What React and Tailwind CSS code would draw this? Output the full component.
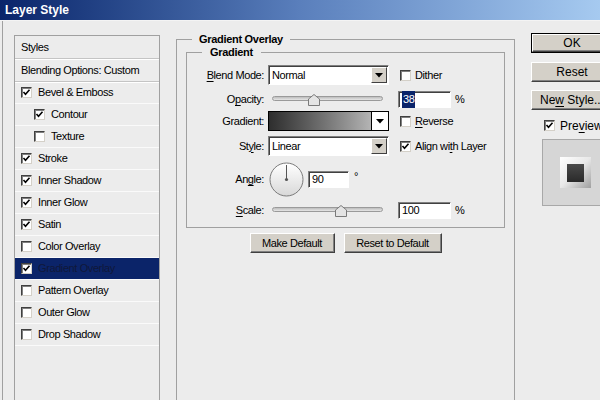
import React from "react";

const font = { fontFamily: '"Liberation Sans", Arial, sans-serif' };

function Check({ checked }) {
  return (
    <span className="inline-flex w-[11px] h-[11px] shrink-0 items-center justify-center bg-white border border-t-[#404040] border-l-[#404040] border-b-[#d4d0c8] border-r-[#d4d0c8] shadow-[inset_1px_1px_0_#808080]">
      {checked && (
        <svg width="9" height="9" viewBox="0 0 9 9">
          <path d="M1.5 4 L3.5 6.2 L7.5 1.8" fill="none" stroke="#000" strokeWidth="1.6" />
        </svg>
      )}
    </span>
  );
}

function U({ children }) {
  return <span className="underline underline-offset-[2px]">{children}</span>;
}

function Button({ children, def, className = "" }) {
  return (
    <div className={`${def ? "border border-black" : ""} ${className}`}>
      <div className="h-full flex items-center justify-center bg-[#d4d0c8] border border-t-white border-l-white border-b-[#404040] border-r-[#404040] shadow-[inset_-1px_-1px_0_#808080] text-black">
        {children}
      </div>
    </div>
  );
}

function Arrow() {
  return (
    <div className="w-[16px] h-full flex items-center justify-center bg-[#d4d0c8] border border-t-white border-l-white border-b-[#404040] border-r-[#404040]">
      <svg width="8" height="5" viewBox="0 0 8 5">
        <path d="M0 0 H8 L4 4.5 Z" fill="#000" />
      </svg>
    </div>
  );
}

function Select({ value }) {
  return (
    <div className="w-[121px] h-[20px] flex bg-white border border-t-[#808080] border-l-[#808080] border-b-white border-r-white shadow-[inset_1px_1px_0_#404040]">
      <div className="flex-1 pl-[3px] pt-[1px] flex items-center">{value}</div>
      <div className="p-[1px] h-full">
        <Arrow />
      </div>
    </div>
  );
}

function Slider({ pos }) {
  return (
    <div className="relative w-[111px] h-[14px] ml-[4px]">
      <div className="absolute left-0 right-0 top-[3px] h-[5px] rounded-full border border-[#9a9a9a] bg-gradient-to-b from-[#bdbdbd] to-[#e6e6e6]" />
      <svg className="absolute top-[1px]" style={{ left: pos - 6 }} width="12" height="12" viewBox="0 0 12 12">
        <path d="M6 0.5 L11.5 5 V11.5 H0.5 V5 Z" fill="#e4e4e4" stroke="#7a7a7a" />
      </svg>
    </div>
  );
}

function Input({ children, w = "w-[53px]" }) {
  return (
    <div className={`${w} h-[17px] bg-white border border-t-[#808080] border-l-[#808080] border-b-white border-r-white shadow-[inset_1px_1px_0_#404040] flex items-center pl-[3px]`}>
      {children}
    </div>
  );
}

const styles = [
  { label: "Bevel & Emboss", checked: true },
  { label: "Contour", checked: true, indent: true },
  { label: "Texture", checked: false, indent: true },
  { label: "Stroke", checked: true },
  { label: "Inner Shadow", checked: true },
  { label: "Inner Glow", checked: true },
  { label: "Satin", checked: true },
  { label: "Color Overlay", checked: false },
  { label: "Gradient Overlay", checked: true, active: true },
  { label: "Pattern Overlay", checked: false },
  { label: "Outer Glow", checked: false },
  { label: "Drop Shadow", checked: false },
];

export default function App() {
  return (
    <div
      className="w-[600px] h-[400px] overflow-hidden bg-[#ececec] text-[11px] tracking-[-0.4px] text-black"
      style={font}
    >
      <div className="h-[21px] flex items-center pl-[5px] bg-gradient-to-r from-[#0a246a] via-[#5a7fbc] to-[#a6caf0] text-white text-[12px] font-bold tracking-normal border-b border-[#f4f4f4]">
        Layer Style
      </div>
      <div className="flex h-[379px] ml-[2px] border-l border-[#a0a0a0]">
        {/* styles list */}
        <div className="ml-[11px] mt-[14px] w-[146px] h-[400px] border border-[#a0a0a0] shrink-0">
          <div className="h-[23px] flex items-center pl-[6px] border-b border-[#c4c4c4] shadow-[0_1px_0_#fff]">Styles</div>
          <div className="h-[23px] flex items-center pl-[6px] border-b border-[#c4c4c4] shadow-[0_1px_0_#fff]">
            Blending Options: Custom
          </div>
          {styles.map((s) => (
            <div
              key={s.label}
              className={`h-[22px] flex items-center gap-[6px] border-b border-[#fafafa] ${
                s.indent ? "pl-[19px]" : "pl-[6px]"
              } ${s.active ? "bg-[#0b2469] text-[#10183a]" : ""}`}
            >
              <Check checked={s.checked} />
              <span>{s.label}</span>
            </div>
          ))}
        </div>

        {/* main group */}
        <fieldset className="ml-[16px] mt-[12px] w-[339px] h-[420px] border border-[#a0a0a0] shrink-0">
          <legend className="ml-[15px] px-[7px] leading-[13px] font-bold tracking-[-0.3px]">Gradient Overlay</legend>
          <fieldset className="mx-[9px] h-[182px] border border-[#a0a0a0]">
            <legend className="ml-[15px] px-[8px] leading-[13px] font-bold tracking-[-0.3px]">Gradient</legend>
            <div className="flex flex-col pt-[6px]">
              <div className="flex items-center h-[20px]">
                <div className="w-[81px] text-right pr-[4px]"><U>B</U>lend Mode:</div>
                <Select value="Normal" />
                <div className="ml-[11px] flex items-center gap-[4px]">
                  <Check />
                  <span>Dither</span>
                </div>
              </div>
              <div className="flex items-center h-[17px] mt-[6px]">
                <div className="w-[81px] text-right pr-[4px]">O<U>p</U>acity:</div>
                <Slider pos={42} />
                <div className="ml-[15px]">
                  <Input>
                    <span className="bg-[#0a246a] text-white px-[1px]">38</span>
                  </Input>
                </div>
                <span className="ml-[4px]">%</span>
              </div>
              <div className="flex items-center h-[20px] mt-[3px]">
                <div className="w-[81px] text-right pr-[4px]">Gradient:</div>
                <div className="w-[121px] h-[20px] flex border border-black bg-white">
                  <div className="w-[103px] h-full bg-gradient-to-r from-[#2e2e2e] to-[#b4b4b4] border-r border-black" />
                  <div className="flex-1 flex items-center justify-center">
                    <svg width="8" height="5" viewBox="0 0 8 5">
                      <path d="M0 0 H8 L4 4.5 Z" fill="#000" />
                    </svg>
                  </div>
                </div>
                <div className="ml-[11px] flex items-center gap-[4px]">
                  <Check />
                  <span><U>R</U>everse</span>
                </div>
              </div>
              <div className="flex items-center h-[20px] mt-[5px]">
                <div className="w-[81px] text-right pr-[4px]">St<U>y</U>le:</div>
                <Select value="Linear" />
                <div className="ml-[11px] flex items-center gap-[4px]">
                  <Check checked />
                  <span>Align wi<U>t</U>h Layer</span>
                </div>
              </div>
              <div className="flex items-center h-[35px] mt-[6px]">
                <div className="w-[81px] text-right pr-[4px]">An<U>g</U>le:</div>
                <svg className="ml-[1px]" width="35" height="35" viewBox="0 0 35 35">
                  <defs>
                    <linearGradient id="dial" x1="0" y1="0" x2="0" y2="1">
                      <stop offset="0" stopColor="#ffffff" />
                      <stop offset="1" stopColor="#d8d8d8" />
                    </linearGradient>
                  </defs>
                  <circle cx="17.5" cy="17.5" r="16.5" fill="url(#dial)" stroke="#7a7a7a" />
                  <line x1="17.5" y1="17.5" x2="17.5" y2="3" stroke="#555" strokeWidth="1" />
                  <circle cx="17.5" cy="17.5" r="1.6" fill="#555" />
                </svg>
                <div className="ml-[4px]">
                  <Input w="w-[41px]">90</Input>
                </div>
                <span className="ml-[5px] self-start mt-[6px]">°</span>
              </div>
              <div className="flex items-center h-[17px] mt-[5px]">
                <div className="w-[81px] text-right pr-[4px]"><U>S</U>cale:</div>
                <Slider pos={69} />
                <div className="ml-[15px]">
                  <Input>100</Input>
                </div>
                <span className="ml-[4px]">%</span>
              </div>
            </div>
          </fieldset>
          <div className="flex justify-center gap-[9px] mt-[5px]">
            <Button className="w-[85px] h-[20px]">Make Default</Button>
            <Button className="w-[98px] h-[20px]">Reset to Default</Button>
          </div>
        </fieldset>

        {/* right column */}
        <div className="ml-[16px] mt-[12px] flex flex-col shrink-0 w-[84px] text-[12px] tracking-normal">
          <Button def className="w-[82px] h-[20px]">OK</Button>
          <Button className="w-[82px] h-[20px] mt-[9px]">Reset</Button>
          <Button className="w-[82px] h-[20px] mt-[8px]">
            <span className="whitespace-nowrap">Ne<U>w</U> Style...</span>
          </Button>
          <div className="flex items-center gap-[5px] ml-[13px] mt-[9px] h-[13px]">
            <Check checked />
            <span>Pre<U>v</U>iew</span>
          </div>
          <div className="ml-[11px] mt-[7px] w-[70px] h-[67px] border border-[#a8a8a8] bg-[#d6d6d6] flex items-center pl-[17px]">
            <div className="w-[31px] h-[31px] bg-gradient-to-br from-white via-[#e8e8e8] to-[#a0a0a0] flex items-center justify-center">
              <div className="w-[17px] h-[18px] bg-gradient-to-b from-[#4a4a4a] to-[#2a2a2a]" />
            </div>
          </div>
        </div>
      </div>
    </div>
  );
}
